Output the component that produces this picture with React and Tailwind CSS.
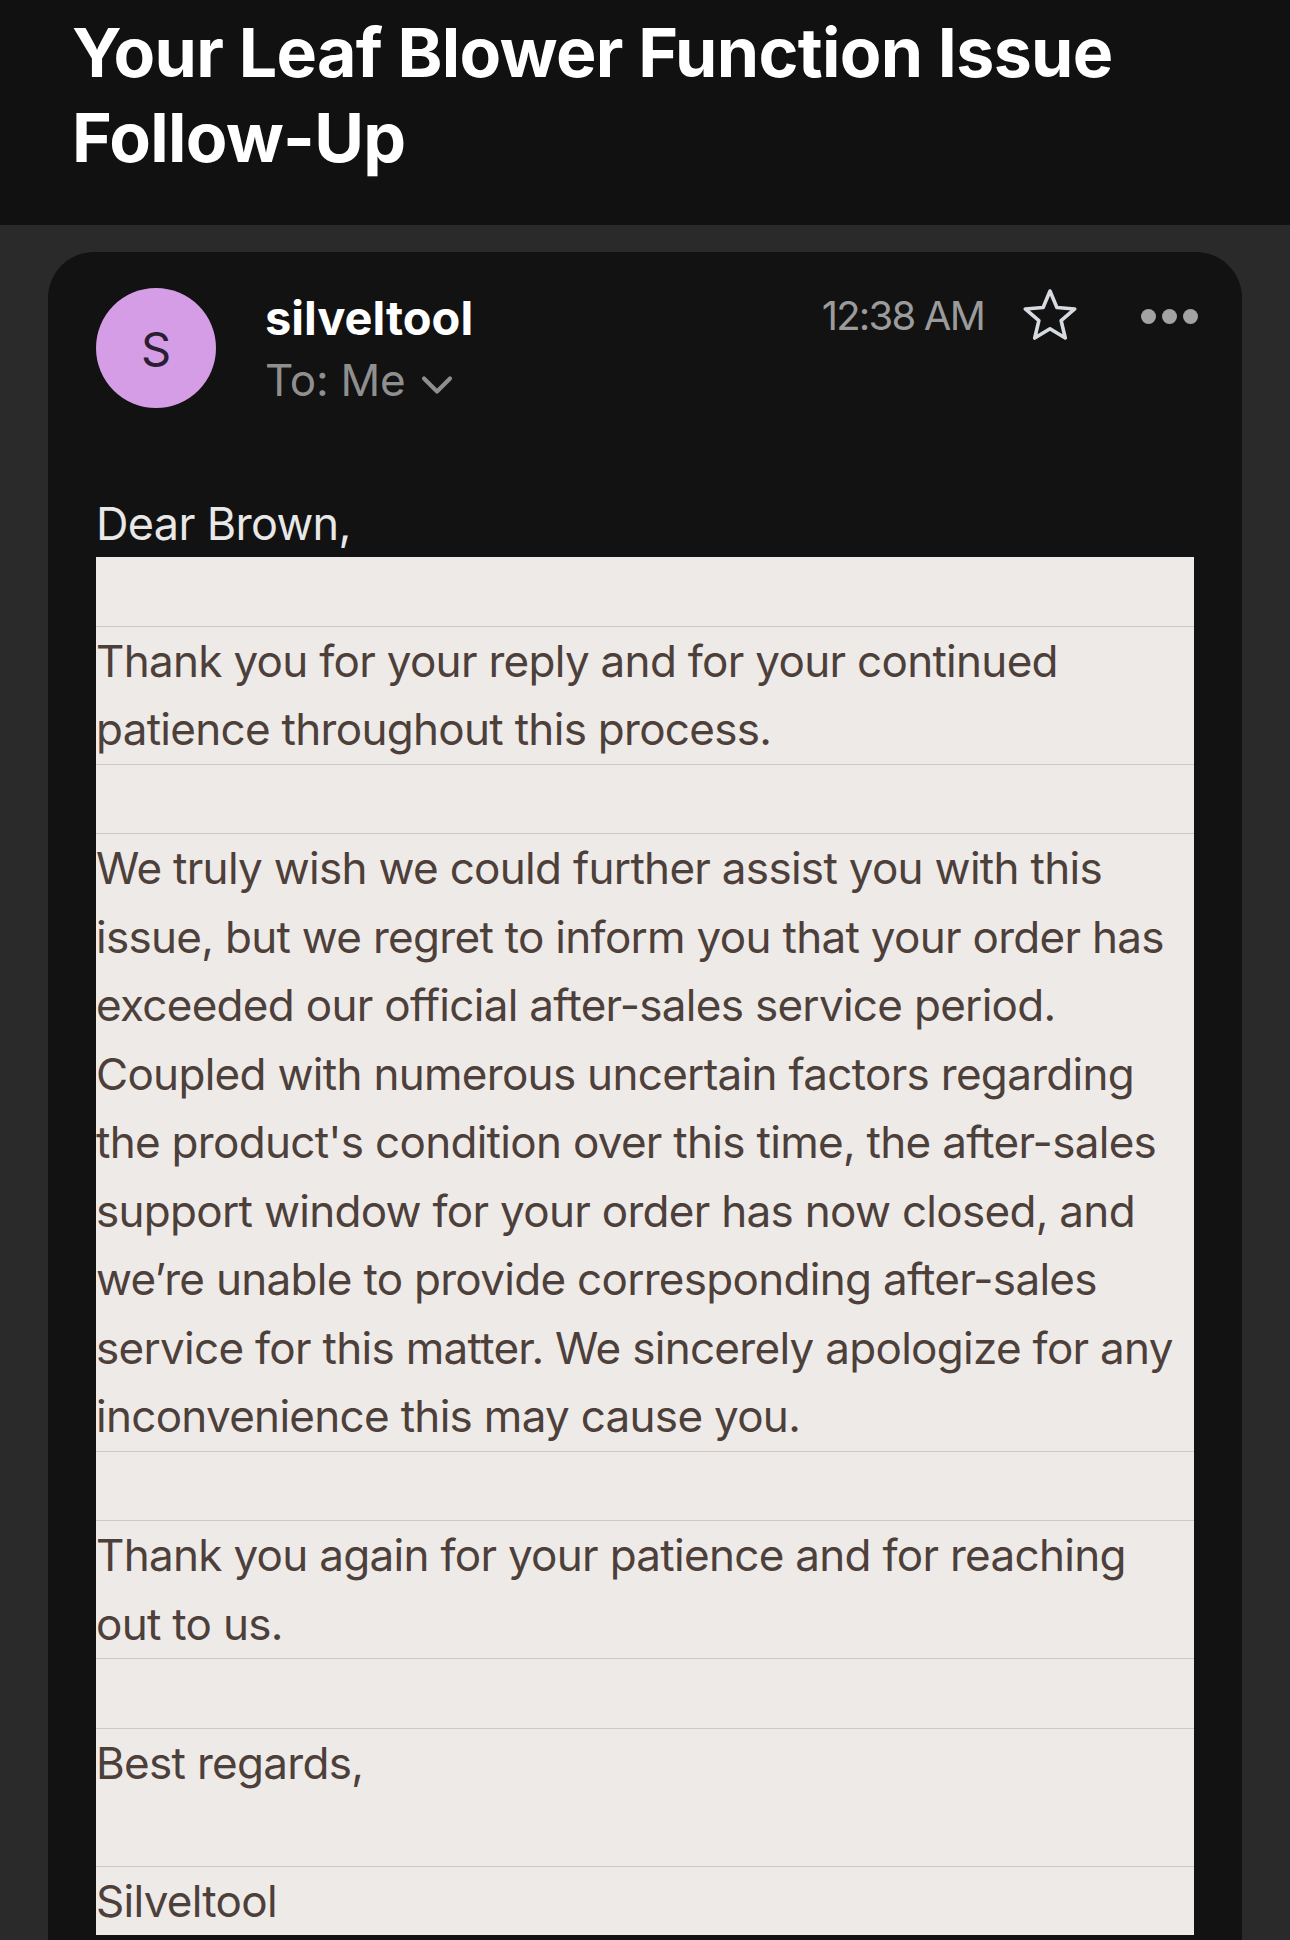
import { ChevronDown } from "lucide-react";

const Star = () => (
  <svg width="60" height="56" viewBox="0 0 60 56" fill="none">
    <polygon
      points="30,3 36.88,19.53 54.73,20.97 41.13,32.62 45.28,50.03 30,40.7 14.72,50.03 18.87,32.62 5.27,20.97 23.12,19.53"
      stroke="#d6dbe2"
      strokeWidth="3.6"
      strokeLinejoin="round"
    />
  </svg>
);

const Row = ({ children, last }) => (
  <div
    className={`leading-[68.5px] ${last ? "" : "border-b border-[#cdc8c4]"}`}
  >
    {children || "\u00a0"}
  </div>
);

const App = () => {
  return (
    <div className="min-h-[1940px] bg-[#2a2a2a] font-['Inter','Noto_Sans',sans-serif]">
      <header className="h-[225px] bg-[#111111] px-[72px] pt-[10px]">
        <h1 className="text-[68px] font-bold leading-[85px] tracking-[-0.01em] text-white">
          Your Leaf Blower Function Issue
          <br />
          Follow-Up
        </h1>
      </header>

      <main className="px-[48px] pt-[27px]">
        <div className="rounded-t-[46px] bg-[#121212] px-[48px] pt-[36px] pb-[6px]">
          <div className="flex items-start">
            <div className="flex h-[120px] w-[120px] shrink-0 items-center justify-center rounded-full bg-[#d59de6] text-[47px] leading-none text-[#2b1d32]">
              S
            </div>
            <div className="ml-[49px] mt-[1px]">
              <div className="text-[47px] font-bold leading-[58px] text-white">
                silveltool
              </div>
              <div className="mt-[4px] flex items-center text-[44px] leading-[58px] tracking-[-0.005em] text-[#8f8f8f]">
                To: Me
                <ChevronDown
                  className="ml-[6px] -my-[10px] mt-[0px] text-[#8f8f8f]"
                  size={52}
                  strokeWidth={1.9}
                />
              </div>
            </div>
            <div className="-mr-[4px] ml-auto flex items-center">
              <span className="text-[40px] leading-[52px] tracking-[-0.045em] text-[#9b9b9b]">
                12:38 AM
              </span>
              <span className="ml-[36px]">
                <Star />
              </span>
              <div className="ml-[61px] flex gap-[6px]">
                <span className="h-[15px] w-[15px] rounded-full bg-[#a3a3a3]" />
                <span className="h-[15px] w-[15px] rounded-full bg-[#a3a3a3]" />
                <span className="h-[15px] w-[15px] rounded-full bg-[#a3a3a3]" />
              </div>
            </div>
          </div>

          <p className="mt-[81px] text-[45px] leading-[67px] tracking-[-0.015em] text-[#e8e8e8]">
            Dear Brown,
          </p>

          <div className="bg-[#eeeae7] text-[44px] tracking-[-0.016em] text-[#4d3f3a]">
            <Row />
            <Row>
              Thank you for your reply and for your continued patience
              throughout this process.
            </Row>
            <Row />
            <Row>
              We truly wish we could further assist you with this issue, but we
              regret to inform you that your order has exceeded our official
              after-sales service period. Coupled with numerous uncertain
              factors regarding the product's condition over this time, the
              after-sales support window for your order has now closed, and
              we’re unable to provide corresponding after-sales service for this
              matter. We sincerely apologize for any inconvenience this may
              cause you.
            </Row>
            <Row />
            <Row>
              Thank you again for your patience and for reaching out to us.
            </Row>
            <Row />
            <Row>
              Best regards,
              <br />
              {"\u00a0"}
            </Row>
            <Row last>Silveltool</Row>
          </div>
        </div>
      </main>
    </div>
  );
};

export default App;
